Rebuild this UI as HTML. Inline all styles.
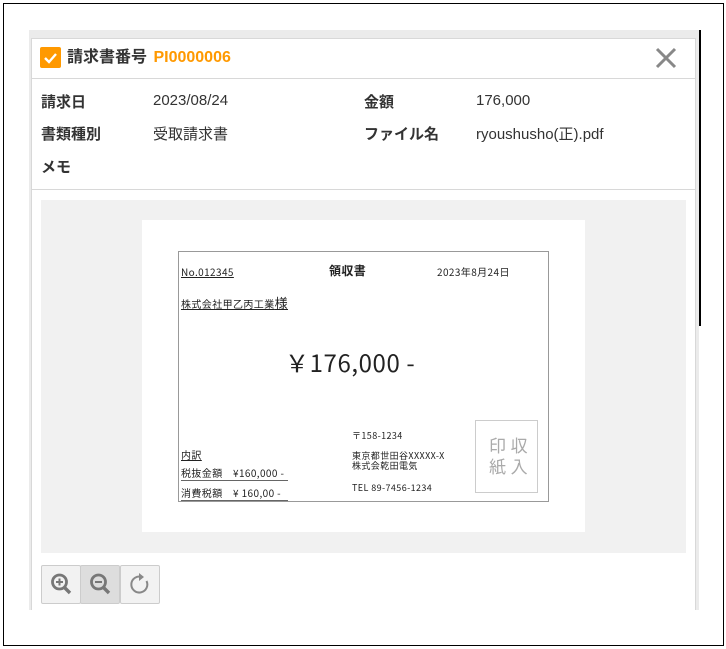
<!DOCTYPE html>
<html><head><meta charset="utf-8"><style>
*{margin:0;padding:0;box-sizing:border-box}
body{width:726px;height:649px;background:#fff;position:relative;overflow:hidden;font-family:"Liberation Sans","Noto Sans CJK JP",sans-serif;color:#333}
.a{position:absolute}
.lbl{font-weight:bold;font-size:15px;color:#333}
.val{font-size:15px;color:#333}
.r{font-family:"Noto Sans CJK JP",sans-serif;color:#222;letter-spacing:0.4px}
.btn{position:absolute;top:565px;width:40px;height:39px;border:1px solid #ccc;border-radius:2px;background:#f2f2f2}
</style></head><body>
<div class="a" style="left:3px;top:3px;width:721px;height:643px;border:1.5px solid #000"></div>
<div class="a" style="left:699px;top:30px;width:1.5px;height:296px;background:#000"></div>
<div class="a" style="left:29px;top:30px;width:670px;height:580px;background:#ebebeb"></div>
<div class="a" style="left:31px;top:38px;width:665px;height:572px;background:#fff;border:1px solid #d8d8d8;border-bottom:none"></div>
<div class="a" style="left:40px;top:47px;width:21px;height:21px;background:#f90;border-radius:2px"></div>
<svg class="a" style="left:40px;top:47px" width="21" height="21"><path d="M5 11l4 4 7-8" stroke="#fff" stroke-width="2.4" fill="none"/></svg>
<div class="a" style="left:67px;top:47px;font-size:16px;font-weight:bold;color:#333;line-height:21px">請求書番号 <span style="color:#f90;margin-left:2px">PI0000006</span></div>
<svg class="a" style="left:655px;top:47px" width="22" height="22"><path d="M2 2L20 20M20 2L2 20" stroke="#888" stroke-width="3"/></svg>
<div class="a" style="left:32px;top:78px;width:664px;height:1px;background:#d8d8d8"></div>
<div class="a lbl" style="left:41px;top:91px">請求日</div><div class="a val" style="left:153px;top:92px">2023/08/24</div>
<div class="a lbl" style="left:364px;top:91px">金額</div><div class="a val" style="left:476px;top:92px">176,000</div>
<div class="a lbl" style="left:41px;top:123px">書類種別</div><div class="a val" style="left:153px;top:123px">受取請求書</div>
<div class="a lbl" style="left:364px;top:123px">ファイル名</div><div class="a val" style="left:476px;top:123px">ryoushusho(正).pdf</div>
<div class="a lbl" style="left:41px;top:156px">メモ</div>
<div class="a" style="left:32px;top:189px;width:664px;height:1px;background:#d8d8d8"></div>
<div class="a" style="left:41px;top:200px;width:645px;height:353px;background:#f1f1f1"></div>
<div class="a" style="left:142px;top:220px;width:443px;height:312px;background:#fff"></div>
<div class="a" style="left:178px;top:251px;width:371px;height:251px;border:1px solid #999"></div>
<div class="a r" style="left:181px;top:264px;font-size:10px;text-decoration:underline">No.012345</div>
<div class="a r" style="left:329px;top:262px;font-size:12px;font-weight:bold">領収書</div>
<div class="a r" style="left:437px;top:264px;font-size:10px">2023年8月24日</div>
<div class="a r" style="left:181px;top:293px;font-size:10px;text-decoration:underline">株式会社甲乙丙工業<span style="font-size:13px">様</span></div>
<div class="a r" style="left:285px;top:346px;font-size:24px;line-height:32px;letter-spacing:0.6px">￥176,000 -</div>
<div class="a r" style="left:352px;top:429px;font-size:9px">〒158-1234</div>
<div class="a r" style="left:352px;top:451px;font-size:9px;line-height:10px">東京都世田谷XXXXX-X<br>株式会乾田電気</div>
<div class="a r" style="left:352px;top:481px;font-size:9px">TEL 89-7456-1234</div>
<div class="a r" style="left:181px;top:447px;font-size:10px;text-decoration:underline">内訳</div>
<div class="a r" style="left:181px;top:465px;font-size:10px;border-bottom:1px solid #666;width:107px">税抜金額　¥160,000 -</div>
<div class="a r" style="left:181px;top:485px;font-size:10px;border-bottom:1px solid #666;width:107px">消費税額　¥ 160,00 -</div>
<div class="a" style="left:475px;top:420px;width:63px;height:73px;border:1px solid #ccc"></div>
<div class="a r" style="left:489px;top:434px;font-size:17px;line-height:21px;color:#aaa">印 収<br>紙 入</div>
<div class="btn" style="left:41px"></div>
<div class="btn" style="left:80px;background:#ddd"></div>
<div class="btn" style="left:120px"></div>
<svg class="a" style="left:50px;top:572px" width="24" height="24"><circle cx="9.5" cy="10" r="7" stroke="#777" stroke-width="2.8" fill="none"/><path d="M14 15l6 6" stroke="#777" stroke-width="3.4"/><path d="M9.5 6.5v7M6 10h7" stroke="#777" stroke-width="2"/></svg>
<svg class="a" style="left:89px;top:572px" width="24" height="24"><circle cx="9.5" cy="10" r="7" stroke="#777" stroke-width="2.8" fill="none"/><path d="M14 15l6 6" stroke="#777" stroke-width="3.4"/><path d="M6 10h7" stroke="#777" stroke-width="2"/></svg>
<svg class="a" style="left:128px;top:572px" width="24" height="24"><path d="M14 5A8 8 0 1 0 18.5 9" stroke="#888" stroke-width="2" fill="none"/><path d="M11 1l5 4-5 4z" fill="#888"/></svg>
</body></html>
